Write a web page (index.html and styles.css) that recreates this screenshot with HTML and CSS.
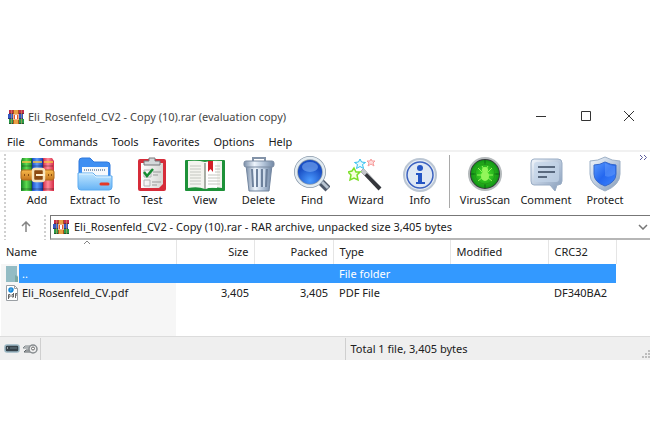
FILE: index.html
```html
<!DOCTYPE html>
<html lang="en">
<head>
<meta charset="utf-8">
<title>Eli_Rosenfeld_CV2 - Copy (10).rar (evaluation copy)</title>
<link rel="stylesheet" href="styles.css">
</head>
<body>
<svg class="defs" aria-hidden="true">
  <defs>
    <linearGradient id="red" x1="0" x2="1"><stop offset="0" stop-color="#d9304c"/><stop offset=".45" stop-color="#ff8a9a"/><stop offset="1" stop-color="#d42a44"/></linearGradient>
    <linearGradient id="green" x1="0" x2="1"><stop offset="0" stop-color="#168326"/><stop offset=".45" stop-color="#5ddc50"/><stop offset="1" stop-color="#14792a"/></linearGradient>
    <linearGradient id="blue" x1="0" x2="1"><stop offset="0" stop-color="#1b4cc8"/><stop offset=".45" stop-color="#5c9bfb"/><stop offset="1" stop-color="#1a40b6"/></linearGradient>
    <linearGradient id="leather" x1="0" x2="0" y1="0" y2="1"><stop offset="0" stop-color="#f9bb4c"/><stop offset="1" stop-color="#c4741c"/></linearGradient>
    <linearGradient id="folder" x1="0" x2="0" y1="0" y2="1"><stop offset="0" stop-color="#c0e6ff"/><stop offset="1" stop-color="#66b3f5"/></linearGradient>
    <linearGradient id="steel" x1="0" x2="1"><stop offset="0" stop-color="#7c90aa"/><stop offset=".35" stop-color="#edf4fc"/><stop offset=".65" stop-color="#b4c5da"/><stop offset="1" stop-color="#7187a4"/></linearGradient>
    <linearGradient id="silver" x1="0" x2="1" y1="0" y2="1"><stop offset="0" stop-color="#f4f8fc"/><stop offset=".5" stop-color="#bac9dd"/><stop offset="1" stop-color="#849bb8"/></linearGradient>
    <linearGradient id="page" x1="0" x2="1"><stop offset="0" stop-color="#fff"/><stop offset="1" stop-color="#d6d6d3"/></linearGradient>
    <radialGradient id="lens" cy=".8"><stop offset="0" stop-color="#4b9bff"/><stop offset="1" stop-color="#1a4fc4"/></radialGradient>
    <radialGradient id="radar"><stop offset="0" stop-color="#4bea2b"/><stop offset="1" stop-color="#129515"/></radialGradient>
    <linearGradient id="shield" x1="0" x2="1" y1="0" y2="1"><stop offset="0" stop-color="#5b9bff"/><stop offset=".5" stop-color="#2467ef"/><stop offset="1" stop-color="#3e86ff"/></linearGradient>
    <symbol id="books" viewBox="0 0 16 16">
      <path fill="#c42d4c" d="M1 1h15v4H1z"/><path fill="#3458c4" d="M0 5h15v5H0z"/><path fill="#2b9a47" d="M1 10h15v5H1z"/>
      <path fill="#7a2438" d="M1 4h15v1H1z"/><path fill="#24367a" d="M0 9h15v1H0z"/><path fill="#1c5c2e" d="M1 14h15v1H1z"/>
      <path fill="#c9a05a" d="M3 1h1v14H3zM13 1h1v14h-1z" opacity=".6"/>
      <path fill="#a8521f" d="M5 1h6v14H5z"/><path fill="#e9a044" d="M6 1h4v14H6z"/>
      <rect x="5.500" y="5.500" width="5" height="5" fill="#e0592e" stroke="#f3b58c"/><path fill="#fff" d="M7 6h2v4H7z"/>
    </symbol>
  </defs>
</svg>
<main class="window">
  <header class="titlebar">
    <svg class="app-icon"><use href="#books"/></svg>
    <h1>Eli_Rosenfeld_CV2 - Copy (10).rar (evaluation copy)</h1>
    <button class="caption" aria-label="Minimize"><svg viewBox="0 0 12 12"><path d="M1 5.500h10"/></svg></button>
    <button class="caption" aria-label="Maximize"><svg viewBox="0 0 12 12"><path d="M1.500 .5h9v9h-9z"/></svg></button>
    <button class="caption" aria-label="Close"><svg viewBox="0 0 12 12"><path d="M1 0l10 10M11 0L1 10"/></svg></button>
  </header>
  <nav class="menu">
    <button>File</button><button>Commands</button><button>Tools</button><button>Favorites</button><button>Options</button><button>Help</button>
  </nav>
  <section class="toolbar" aria-label="Toolbar">
    <span class="grip"></span>
    <div class="tools">
      <button><svg viewBox="0 0 36 36">
        <path d="M3 2h10l1 33H2V5z" fill="url(#green)"/><path d="M13 2h11v33H13z" fill="url(#blue)"/><path d="M24 2h9l2 3v30H24z" fill="url(#red)"/>
        <path stroke="#f3c443" stroke-width="1.500" d="M3 6h9M14 6h9M25 6h9"/><path stroke="#000" opacity=".35" d="M3 10h31M2 33h33M13 3v31M24 3v31"/>
        <rect x="2" y="14" width="33" height="10" rx="2" fill="url(#leather)" stroke="#b06a1c"/>
        <rect x="14" y="13" width="11" height="12" rx="2" fill="#8c4a12" stroke="#f5e2b8" stroke-width="2.500"/><path d="M17 19h9" stroke="#fff1cf" stroke-width="2"/>
        <path d="M5 19h1M9 19h1M29 19h1M32 19h1" stroke="#8a4e10" stroke-width="2"/></svg><span>Add</span></button>
      <button><svg viewBox="0 0 36 36">
        <path d="M2 5q0-3 3-3h8l4 4h13q3 0 3 3v16H2z" fill="#3f8ff2" stroke="#2f78dc"/>
        <path d="M5 11h26v15H5z" fill="#f6f9fc"/><path d="M7 14h22" stroke="#8a9fb8" stroke-width="2" stroke-dasharray="1 1"/>
        <path d="M1 17h15l3 3h16v11q0 3-3 3H4q-3 0-3-3z" fill="url(#folder)" stroke="#5cabf0"/><path d="M2 18h14l3 3h15" fill="none" stroke="#e6f6ff"/>
        <path d="M24 28h7" stroke="#e43827" stroke-width="3" stroke-linecap="round"/></svg><span>Extract To</span></button>
      <button><svg viewBox="0 0 36 36">
        <rect x="4" y="3" width="28" height="32" rx="2" fill="#d62c39"/><path d="M7 7h22v21l-4 4H7z" fill="url(#page)"/>
        <path d="M10 9V5h5V2h6v3h5v4z" fill="#d4d8da" stroke="#77777a"/>
        <path d="M10 14h7v7h-7zM10 24h6v6h-6z" fill="none" stroke="#b4b4b4"/><path d="M19 16h8M19 19h5M18 26h9M18 29h5" stroke="#999"/>
        <path d="M10 16l3 4 6-7" fill="none" stroke="#168b32" stroke-width="2.500"/></svg><span>Test</span></button>
      <button><svg class="book" viewBox="0 0 42 36">
        <rect x="1" y="4" width="40" height="31" rx="1" fill="#1d9138"/><path d="M4 5q10-1 17 1 7-2 17-1v27q-10-2-17 1-7-3-17-1z" fill="#f4f4ef"/>
        <path d="M21 7q6-3 12-1v26q-8-1-12 1z" fill="#fff"/><path d="M21 7v26" stroke="#8d9388" stroke-width="1.500"/>
        <path d="M6 10h11M6 13h11M6 16h11M6 19h11M6 22h11M6 25h11M6 28h11M24 19h12M24 22h12M24 25h12M24 28h12M31 10h5M31 13h5M31 16h5" stroke="#c4c6c0"/>
        <path d="M24 5h5v11l-2.500-3-2.500 3z" fill="#d31f28"/></svg><span>View</span></button>
      <button><svg viewBox="0 0 36 36">
        <path d="M12 5V2h12v3" fill="none" stroke="#8393a8" stroke-width="2"/><path d="M5 9h26l-3 26H8z" fill="url(#steel)" stroke="#7386a0"/>
        <path d="M11 13l1 18M16 13v18M21 13v18M26 13l-1 18" stroke="#6d819c" stroke-width="2"/><path d="M13 13l1 18M18 13v18M23 13v18" stroke="#edf5ff"/>
        <rect x="3" y="5" width="30" height="6" rx="2" fill="url(#steel)" stroke="#7b8ba2"/></svg><span>Delete</span></button>
      <button><svg viewBox="0 0 36 36">
        <path d="M26 25l8 8" stroke="#4d5768" stroke-width="7"/><path d="M26 24l8 8" stroke="#b8c4d1" stroke-width="3"/>
        <circle cx="16" cy="16" r="14" fill="url(#lens)" stroke="#8a9aab" stroke-width="4"/><circle cx="16" cy="16" r="14" fill="none" stroke="#e2ebf1" stroke-width="2.500"/>
        <ellipse cx="16" cy="11" rx="8" ry="5" fill="#83b2f5" opacity=".55"/></svg><span>Find</span></button>
      <button><svg viewBox="0 0 36 36">
        <path d="M14 14l18 19" stroke="#34363b" stroke-width="4"/><path d="M15 13l18 18" stroke="#8f9399"/><path d="M14 14l4 4" stroke="#c4c7cb" stroke-width="4"/>
        <path d="M6 12l2 4 4 0-3 3 1 5-4-2-4 2 1-5-3-3 4-1z" fill="#f6ffdc" stroke="#7de02a" stroke-width="1.500"/>
        <path d="M12 3l1.500 3 4 .5-3 2 1 4-3.500-2-3.500 2 1-4-3-2 4-.5z" fill="#e8faff" stroke="#34bfee"/>
        <path d="M23 3l1 2h3l-2 2 1 3-3-2-3 2 1-3-2-2h3z" fill="#ffdede" stroke="#f79c9c"/></svg><span>Wizard</span></button>
      <button><svg viewBox="0 0 36 36">
        <circle cx="18" cy="19" r="16" fill="#e4ebf3" stroke="#bcc7d4" stroke-width="2"/><circle cx="18" cy="19" r="13" fill="#dfe8f4" stroke="#3c62c0" stroke-width="1.500"/>
        <circle cx="18" cy="12" r="3" fill="#2455c4"/><path d="M14 17h6v9h3v2h-9v-2h2v-7h-2z" fill="#2455c4"/></svg><span>Info</span></button>
      <i class="separator"></i>
      <button><svg viewBox="0 0 36 36">
        <circle cx="18" cy="18" r="16" fill="#34383a" stroke="#b5babc" stroke-width="2"/><circle cx="18" cy="18" r="14" fill="url(#radar)"/>
        <path d="M18 4v5M18 28v4M4 18h5M27 18h5" stroke="#0b6512"/><circle cx="18" cy="18" r="10" fill="none" stroke="#229c18"/>
        <path d="M11 12l4 4M25 12l-4 4M10 19h16M11 25l5-4M25 25l-5-4M15 10l2 3M21 10l-2 3" stroke="#93f65a"/><circle cx="18" cy="14" r="3" fill="#93f65a"/><ellipse cx="18" cy="20" rx="4" ry="5" fill="#93f65a"/></svg><span>VirusScan</span></button>
      <button><svg viewBox="0 0 36 36">
        <path d="M6 3h24q4 0 4 4v18q0 4-4 4h-1l-2 6-5-6H6q-3 0-3-4V7q0-4 3-4z" fill="url(#silver)" stroke="#9aadc5"/><rect x="6" y="6" width="25" height="20" rx="3" fill="#c3d4e8" opacity=".7"/>
        <path d="M10 11h17M10 16h17M10 21h9" stroke="#37475e" stroke-width="1.500"/></svg><span>Comment</span></button>
      <button><svg viewBox="0 0 36 36">
        <path d="M18 1q7 4 15 4v13q0 11-15 17Q3 29 3 18V5q8 0 15-4z" fill="url(#silver)" stroke="#9db0c6"/><path d="M18 6q6 3 11 3v9q0 8-11 12Q7 26 7 18V9q6 0 11-3z" fill="url(#shield)" stroke="#3468cc"/>
        <path d="M18 7q5 3 10 3v8q-5 4-10 2z" fill="#75aaff" opacity=".4"/></svg><span>Protect</span></button>
    </div>
    <button class="more" aria-label="More tools"><svg viewBox="0 0 9 7"><path d="M1 1l2.500 2.500L1 6M5 1l2.500 2.500L5 6"/></svg></button>
  </section>
  <section class="location">
    <span class="grip"></span>
    <button class="up" aria-label="Up one level"><svg viewBox="0 0 12 12"><path d="M6 11V1M2 5l4-4 4 4"/></svg></button>
    <span class="grip"></span>
    <label class="address"><svg class="app-icon"><use href="#books"/></svg>
      <select aria-label="Archive path"><option>Eli_Rosenfeld_CV2 - Copy (10).rar - RAR archive, unpacked size 3,405 bytes</option></select>
      <svg class="chevron" viewBox="0 0 10 6"><path d="M1 1l4 4 4-4"/></svg></label>
  </section>
  <section class="files">
    <table>
      <colgroup><col class="c-name"><col class="c-size"><col class="c-packed"><col class="c-type"><col class="c-modified"><col class="c-crc"><col></colgroup>
      <thead><tr><th class="sorted">Name<svg viewBox="0 0 8 5"><path d="M1 4l3-3 3 3"/></svg></th><th class="num">Size</th><th class="num">Packed</th><th>Type</th><th>Modified</th><th>CRC32</th><td></td></tr></thead>
      <tbody>
        <tr class="selected"><td><div class="file"><svg viewBox="0 0 14 16"><path fill="#93bcc4" d="M1 0h11v9l1 2v5H1z"/><path fill="#7aa8a2" d="M10 9l3 2v5h-3z"/></svg><span>..</span></div></td><td></td><td></td><td>File folder</td><td></td><td></td><td></td></tr>
        <tr><td><div class="file"><svg viewBox="0 0 14 16"><path d="M1.500.5h8l3 3v12h-11z" fill="#fff" stroke="#9a9fa4"/><path d="M9.500.5v3h3" fill="none" stroke="#9a9fa4"/><path d="M4 5h4q0-2-2-2T4 5q0 2 2 2l2-1" fill="none" stroke="#1688d8" stroke-width="1.500"/><path d="M3.500 14V9.500H5v2.500H3.500M8.500 8v4H7V9.500h1.500M10.500 13V8.500H12M10 10h2" fill="none" stroke="#666"/></svg><span>Eli_Rosenfeld_CV.pdf</span></div></td><td class="num">3,405</td><td class="num">3,405</td><td>PDF File</td><td></td><td>DF340BA2</td><td></td></tr>
        <tr class="blank"><td></td><td colspan="6"></td></tr>
      </tbody>
    </table>
  </section>
  <footer class="status">
    <div class="indicators">
      <svg viewBox="0 0 16 10"><rect x="1" y="1" width="14" height="7" rx="2" fill="#354149" stroke="#9bb7c3" stroke-width="1.500"/><path d="M3 4h1" stroke="#fff"/><path d="M6 4h7" stroke="#697c85"/></svg>
      <svg viewBox="0 0 16 10"><path d="M9 2H3L1 4h8" fill="#ddd" stroke="#7d8589"/><path d="M9 6H4L2 8h7" fill="#ccc" stroke="#5c6468"/><circle cx="11" cy="5" r="4" fill="#eee" stroke="#888d90" stroke-width="1.500"/><circle cx="11" cy="4.500" r="1.500" fill="#fff" stroke="#666"/></svg>
    </div>
    <div></div>
    <div class="total">Total 1 file, 3,405 bytes</div>
    <svg class="resize" viewBox="0 0 8 8"><path d="M6 0h2v2H6zM3 3h2v2H3zM6 3h2v2H6zM0 6h2v2H0zM3 6h2v2H3zM6 6h2v2H6z"/></svg>
  </footer>
</main>
</body>
</html>
```
FILE: styles.css
```css
* { box-sizing: border-box; }
body {
  margin: 0;
  padding-top: 100px;
  background: #fff;
  color: #202020;
  font: 11px/16px "Noto Sans", "Open Sans", sans-serif;
}
.defs { position: absolute; width: 0; height: 0; }
svg { display: block; flex: none; }
button, select { margin: 0; padding: 0; border: 0; background: none; color: inherit; font: inherit; }
.window { overflow: hidden; }
.titlebar { display: flex; align-items: center; height: 34px; padding-left: 8px; }
.app-icon { width: 16px; height: 16px; }
h1 { flex: 1; margin: 0 0 0 4px; color: #454545; font-size: 11px; font-weight: 400; white-space: nowrap; }
.caption { display: grid; place-items: center; width: 45px; height: 32px; }
.caption:last-child { width: 42px; }
.caption svg { width: 12px; height: 12px; fill: none; stroke: #333; }
.menu { display: flex; gap: 14px; height: 18px; padding-left: 7px; border-bottom: 2px solid #f1f1f1; }
.toolbar { display: flex; align-items: flex-start; height: 60px; padding-left: 4px; }
.grip { align-self: stretch; width: 2px; margin-top: 2px; background: repeating-linear-gradient(#d0d0d0 0 2px, transparent 2px 4px); }
.tools { display: grid; grid-template-columns: 54px 62px 52px 54px 53px 54px 54px 54px 8px 60px 62px 56px; margin-left: 4px; }
.tools button { display: flex; flex-direction: column; align-items: center; padding-top: 4px; white-space: nowrap; }
.tools svg { width: 36px; height: 36px; }
.tools .book { width: 42px; }
.separator { width: 1px; margin: 3px 0 0 2px; background: #a9a9a9; }
.more { margin: 2px 2px 0 auto; }
.more svg { width: 9px; height: 7px; fill: none; stroke: #5b5b9d; }
.location { display: flex; height: 28px; padding: 1px 0 0 4px; }
.up { display: grid; place-items: center; width: 31px; margin: 0 3px 0 4px; }
.up svg { width: 12px; height: 12px; fill: none; stroke: #858585; stroke-width: 1.5; }
.address { display: flex; flex: 1; align-items: center; margin: 2px 0 0 4px; padding: 0 2px; border: 1px solid #777; border-right: 0; border-bottom: 2px solid #b6b6b6; }
.address select { flex: 1; min-width: 0; padding-left: 5px; appearance: none; }
.chevron { width: 10px; height: 6px; fill: none; stroke: #777; stroke-width: 1.5; }
.files { padding-left: 1px; }
table { width: 100%; border-collapse: collapse; table-layout: fixed; }
.c-name { width: 175px; }
.c-size { width: 78px; }
.c-packed { width: 79px; }
.c-type { width: 117px; }
.c-modified { width: 98px; }
.c-crc { width: 68px; }
th, td { height: 19px; padding: 0 5px 0 6px; text-align: left; font-weight: 400; white-space: nowrap; }
th { height: 24px; border-right: 1px solid #e5e5e5; }
.sorted { position: relative; padding-left: 5px; }
.sorted svg { position: absolute; top: 0; left: 82px; width: 8px; height: 5px; fill: none; stroke: #858585; }
.num { text-align: right; }
tbody td:first-child { padding: 0 0 0 4px; background: #f6f6f6; }
.file { display: flex; height: 19px; align-items: center; }
.file svg { width: 14px; height: 16px; }
.file span { flex: 1; padding-left: 3px; }
.selected { color: #fff; }
.selected td:not(:first-child):not(:last-child), .selected .file span { background: #3399ff; }
.selected .file span { line-height: 19px; }
.blank td { height: 34px; }
.status { display: grid; grid-template-columns: 41px 1fr 1fr; align-items: center; height: 24px; position: relative; border-top: 1px solid #dcdcdc; background: #efefef; }
.status > div { height: 22px; border-right: 1px solid #cfcfcf; line-height: 22px; }
.status .total { padding-left: 5px; border-right: 0; }
.indicators { display: flex; align-items: center; gap: 2px; padding-left: 4px; }
.indicators svg { width: 16px; height: 10px; }
.resize { position: absolute; right: 0; bottom: 2px; width: 8px; height: 8px; fill: #bdbdbd; }
```
